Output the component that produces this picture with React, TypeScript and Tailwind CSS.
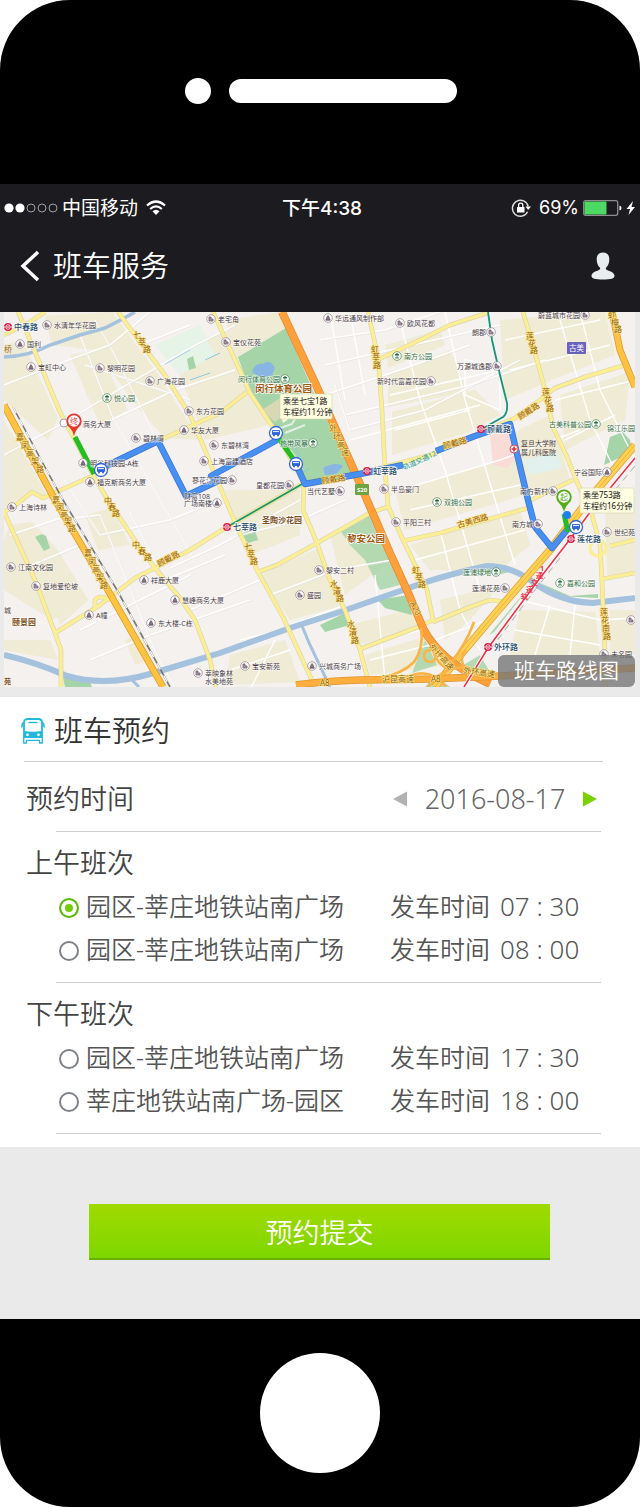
import { useState } from "react";

type Poi = [number, number, string, ("home" | "tower" | "park")?, ("l" | "r")?];

const pois: Poi[] = [
  [54, 325, "水清年华花园", "home"],
  [27, 344, "国利", "tower"],
  [38, 367, "宝虹中心", "tower"],
  [107, 368, "黎明花园", "home"],
  [157, 381, "广海花园", "home"],
  [196, 411, "东方花园", "home"],
  [83, 424, "商务大厦"],
  [191, 430, "华友大厦", "tower"],
  [143, 438, "碧林湾", "home"],
  [90, 463, "明谷科技园-A栋", "tower"],
  [97, 482, "福克斯商务大厦", "tower"],
  [218, 319, "老宅角", "home"],
  [233, 342, "宝仪花苑", "home"],
  [335, 318, "华远通风制作部", "tower"],
  [407, 323, "欧风花都", "home"],
  [221, 445, "东碧林湾", "home"],
  [211, 461, "上海富建酒店", "home"],
  [192, 480, "蓼花汀花园", "home", "r"],
  [184, 496, "财富108"],
  [184, 503, "广场南楼", "tower", "r"],
  [256, 485, "皇都花园", "home", "r"],
  [307, 491, "当代艺墅", "home", "r"],
  [391, 489, "半岛豪门", "home"],
  [377, 381, "新时代富嘉花园", "home", "r"],
  [538, 315, "蔚蓝城市花园", "home", "r"],
  [472, 332, "朗郡", "home", "r"],
  [457, 366, "万源城逸郡", "home", "r"],
  [574, 472, "宁谷国际", "tower", "r"],
  [520, 491, "南方新村", "home", "r"],
  [512, 524, "南方城", "home", "r"],
  [19, 507, "上海诗林", "home"],
  [18, 567, "江南文化园", "home"],
  [43, 586, "复地爱伦坡", "home"],
  [96, 615, "A幢", "tower"],
  [151, 580, "祥鹿大厦", "tower"],
  [182, 600, "慧峰商务大厦", "tower"],
  [158, 623, "东大楼-C栋", "tower"],
  [205, 673, "莘映象林", "home"],
  [205, 681, "水美地苑"],
  [252, 666, "宝安新苑", "home"],
  [319, 666, "兴城商务广场", "tower"],
  [326, 570, "黎安二村", "home"],
  [307, 595, "盛园", "home"],
  [403, 522, "平阳三村", "home"],
  [472, 588, "莲浦花苑", "home", "r"],
  [614, 532, "世纪苑", "home"],
  [611, 654, "未名园", "home"],
  [4, 610, "城"],
];

const greenLabels: Poi[] = [
  [114, 398, "悦心园", "park"],
  [404, 356, "南方公园", "park"],
  [444, 502, "双拥公园", "park"],
  [567, 583, "嘉和公园", "park"],
  [238, 379, "闵行体育公园", "park", "r"],
  [280, 443, "热带风暴", "park", "r"],
  [549, 424, "古美科普公园", "park", "r"],
  [463, 572, "莲浦绿地", "park", "r"],
  [607, 428, "锦江乐园"],
];

// text, first character, step to the next character
const stacked: [string, number, number, number, number][] = [
  ["七莘路", 133, 338, 5, 7],
  ["七莘路", 244, 550, 3, 7],
  ["嘉闵高架路", 16, 440, 5, 8],
  ["嘉闵高架路", 52, 503, 4, 7],
  ["嘉闵高架路", 84, 556, 4, 8],
  ["中春路", 104, 504, 4, 6],
  ["中春路", 132, 548, 6, 6],
  ["虹莘路", 371, 352, 1, 8],
  ["虹莘路", 412, 573, 3, 7],
  ["水清路", 330, 587, 3, 7],
  ["水清路", 347, 627, 2, 8],
  ["莲花路", 526, 339, 2, 7],
  ["莲花路", 542, 395, 2, 8],
  ["莲花南路", 600, 615, 1, 8],
  ["外环高速", 329, 431, 4, 8],
  ["虹梅路", 608, 318, 3, 7],
];

const slanted: [string, number, number, number][] = [
  ["顾戴路", 159, 567, -28],
  ["顾戴路", 322, 484, -9],
  ["顾戴路", 444, 449, -15],
  ["顾戴路", 520, 420, -33],
  ["古美西路", 458, 528, -16],
  ["外环高速", 429, 647, 48],
  ["外环高速", 463, 673, 8],
  ["沪昆高速", 382, 682, 0],
];

const yellowRoads = [
  "M4 335 25 325 45 312",
  "M18 312 25 328 60 412 75 440 93 475 108 500 138 545 155 568 180 598 195 620 210 660 216 687",
  "M118 312 140 342 165 375 190 415 205 450 215 475 232 515 240 533 258 572 283 617 315 687",
  "M4 512 17 504 32 492 43 498 90 477 133 453 160 440 220 413 247 392",
  "M4 512 35 580 55 633 61 650V687",
  "M55 633 100 605 135 578 155 568 190 550 227 527 304 483",
  "M95 607V600Q100 594 110 600",
  "M213 312 235 360 250 393 276 432 304 483 303 510 317 543 330 580 345 610 360 650 370 687",
  "M258 572 277 565 317 543 370 513 390 506",
  "M368 312 378 357 382 410 385 470 388 506 403 540 427 590 433 620 418 627 360 649",
  "M377 360 420 340 450 325 487 313",
  "M403 541 440 533 528 508",
  "M523 312 537 360 545 390 553 427 567 457 577 482 592 515 600 545 602 583 605 653V687",
  "M304 483 365 472 430 455 487 430 515 418 540 400 555 388 585 377 622 366",
  "M531 500 573 480",
  "M433 622 470 607 490 600 506 602",
  "M602 579 635 573",
  "M610 546 635 540",
];

const whiteRoads = [
  "M4 455 60 425 118 390 190 348 235 325", "M52 345 80 335 112 415 135 455 195 560", "M95 320 115 355 155 435",
  "M4 385 55 365 110 345 150 312", "M140 345 190 325", "M85 365 190 400", "M90 430 175 390 235 370",
  "M65 480 100 535 170 520 220 500", "M60 520 100 515 135 600 155 650 175 687", "M130 512 165 580 225 555",
  "M10 535 70 515", "M20 570 80 545 60 505", "M80 630 140 600 190 575", "M90 660 150 635 250 600",
  "M170 568 220 545 300 500", "M190 610 260 580", "M240 535 300 520 345 500", "M270 595 335 570 392 560",
  "M290 625 340 607", "M310 400 400 370 470 345", "M320 340 385 330 440 312", "M335 385 350 430 425 410 520 360",
  "M325 365 500 325", "M345 415 470 385 545 360", "M350 440 480 405", "M400 320 420 400 445 470 480 590",
  "M445 312 465 400 495 500 515 565", "M390 395 500 370", "M395 430 470 410", "M400 490 500 460 580 430",
  "M505 340 600 320", "M510 370 610 345", "M555 400 635 380", "M560 320 590 420 620 480", "M580 312 600 390 635 460",
  "M565 440 615 415", "M410 510 520 485", "M415 560 525 530", "M440 530 460 610 480 650", "M520 600 600 620 635 618",
  "M515 630 600 645", "M550 605 535 655", "M575 605 570 655", "M435 640 500 615", "M385 640 420 630",
  "M370 660 430 645", "M610 500 635 495", "M605 600 635 595", "M240 640 300 625", "M230 670 290 650",
  "M250 690 275 640", "M375 575 385 680", "M330 312 345 400", "M350 312 365 395", "M465 360 500 365 500 410 465 395Z",
];

const blocks = [
  "M4 345 22 340 58 418 48 440 4 400Z",
  "M45 316 112 312 155 370 200 440 165 438 140 410 95 350 52 345Z",
  "M70 355 98 350 128 410 100 425Z",
  "M170 350 230 330 270 425 205 440Z",
  "M4 420 50 500 30 492 4 508Z",
  "M30 520 58 550 88 600 60 625Z",
  "M10 525 30 522 70 610 52 620 4 590V540Z",
  "M85 515 112 508 130 545 98 550Z",
  "M4 640 50 640 58 660 4 650Z",
  "M125 640 145 635 150 660 135 665Z",
  "M225 320 280 312 290 330 240 355Z",
  "M225 490 300 490 300 535 250 555Z",
  "M260 575 318 548 335 590 345 605 290 620Z",
  "M330 535 380 515 392 560 345 595Z",
  "M230 655 285 640 300 682 225 685Z",
  "M350 625 415 608 425 625 360 645Z",
  "M365 655 430 635 450 665 370 675Z",
  "M392 412 475 390 500 415 470 432 392 455Z",
  "M388 375 450 350 468 392 388 407Z",
  "M395 490 520 455 525 495 405 530Z",
  "M385 345 440 330 445 345 388 368Z",
  "M500 320 605 312 615 355 552 380 505 400Z",
  "M560 395 630 372 625 420 565 450Z",
  "M515 432 550 415 570 480 530 495Z",
  "M410 545 520 510 530 545 500 570 430 570Z",
  "M605 500 635 495V575L607 575Z",
  "M520 610 595 612 600 655 510 655Z",
  "M610 610H635V655H610Z",
  "M440 600 500 585 470 620 445 640Z",
];

const cjk = "font-['Noto_Sans','Noto_Sans_CJK_SC',sans-serif]";

function PoiLabel({ item, color }: { item: Poi; color: string }) {
  const [x, y, text, kind, side] = item;
  const width = [...text].reduce((w, c) => w + (c.charCodeAt(0) > 255 ? 7 : 4), 0);
  const cx = side === "r" ? x + width + 5 : x - 7;
  return (
    <g>
      <text x={x} y={y + 3} fontSize="7" fill={color} stroke="#ffffff" strokeOpacity="0.7" strokeWidth="1.2" paintOrder="stroke">{text}</text>
      {kind && (
        <g transform={`translate(${cx} ${y})`}>
          <circle r="4.3" fill="#fff" stroke={kind === "park" ? "#5b9065" : "#9b8e98"} strokeWidth="0.8" />
          {kind === "park" && <path d="M-2 2H2M0 2V-1M-2-1Q0-4 2-1Z" fill="#28713c" stroke="#28713c" strokeWidth="0.8" />}
          {kind === "tower" && <path d="M-2 2 -1-1 0-2.5 1-1 2 2ZM-2.5 2H2.5" fill="#8b7483" stroke="#6e5a69" strokeWidth="0.8" />}
          {kind === "home" && <path d="M-2 2V-2H0V0H2V2Z" fill="#aa9aa5" stroke="#6e5a69" strokeWidth="0.8" />}
        </g>
      )}
    </g>
  );
}

function Metro({ x, y, name }: { x: number; y: number; name: string }) {
  return (
    <g transform={`translate(${x} ${y})`}>
      <circle r="4" fill="#d91e49" />
      <path d="M-4 0H4" stroke="#fff" strokeWidth="1" />
      <path d="M2-1.500Q0-3-2-1.500M-2 1.500Q0 3 2 1.500" fill="none" stroke="#fff" strokeWidth="0.8" />
      <text x="6" y="3" fontSize="8" fontWeight="500" fill="#24486a" stroke="#fff" strokeWidth="1.5" paintOrder="stroke">{name}</text>
    </g>
  );
}

function BusStop({ x, y }: { x: number; y: number }) {
  return (
    <g transform={`translate(${x} ${y})`}>
      <circle r="6.5" fill="#fff" stroke="#3165dd" strokeWidth="1.3" />
      <rect x="-4" y="-3" width="8" height="5" rx="1" fill="#3165dd" />
      <path d="M-3-1.500H3" stroke="#dce8ff" strokeWidth="1.2" />
      <circle cx="-2" cy="2.5" r="1" fill="#3165dd" /><circle cx="2" cy="2.5" r="1" fill="#3165dd" />
    </g>
  );
}

function Pin({ x, y, color, text }: { x: number; y: number; color: string; text: string }) {
  return (
    <g transform={`translate(${x} ${y})`}>
      <path d="M0 15Q-1.500 9-5 6A7.700 7.700 0 1 1 5 6Q1.500 9 0 15Z" fill={color} />
      <circle r="5.8" fill="#fff" />
      <text y="2.800" textAnchor="middle" fontSize="8" fill={color}>{text}</text>
    </g>
  );
}

function Callout({ x, y, w, lines }: { x: number; y: number; w: number; lines: string[] }) {
  return (
    <g transform={`translate(${x} ${y})`}>
      <rect width={w} height="25" rx="1" fill="#fffee1" stroke="#d3d0af" strokeWidth="0.6" />
      {lines.map((l, i) => (
        <text key={l} x="3" y={10 + i * 11} fontSize="8" fill="#111">{l}</text>
      ))}
    </g>
  );
}

function RouteMap() {
  const railway = "M13 407 40 458 63 500 117 590 170 687";
  const viaduct = "M4 405 55 500 105 585 163 687";
  const hongmei = "M612 312 620 350 635 387";
  const southExpress = "M635 445 590 498 550 550 500 608 457 659 435 687";
  const ring = "M282 312 317 387 357 477 390 553 410 597 423 628Q440 662 490 684";
  const a8 = "M296 685Q325 681 360 680L430 679 500 676 635 668";
  const metroOne = "M635 458 588 515 571 538 540 578 488 648 464 687";
  const busRoute = "M100 469 158 441 186 496 220 480 211 476 277 440M296 464 305 484 365 473 403 465M436 451 475 436 510 424 528 500 535 527 552 548 567 530";
  return (
    <svg viewBox="4 312 631 375" className={`block h-auto w-full font-normal ${cjk}`} role="img" aria-label="班车路线图">
      <rect x="4" y="312" width="631" height="375" fill="#f4f1ee" />
      {blocks.map((d) => <path key={d} d={d} fill="#efebd5" />)}
      <path d="M490 435 515 428 518 455 508 468 493 465Z" fill="#fadbd6" />
      <path d="M523 460 557 452 562 468 530 475Z" fill="#e2f1ee" />
      <path d="M155 345 200 325 215 355 180 375Z" fill="#e6f3e7" />
      <g fill="#a5d4a8">
        <path d="M238 357 286 328 318 402 355 476 305 483 278 432 250 390Z" />
        <path d="M187 359 193 356 196 368 189 370Z" />
        <path d="M35 537 42 534 46 536 50 548 44 551 39 543Z" />
        <path d="M63 677 90 682 92 687H65Z" />
        <path d="M340 530 370 514 383 540 400 585 380 590 365 560 350 545Z" opacity=".8" />
        <path d="M610 437 623 432 630 440 632 452 604 465Z" />
        <path d="M378 600 408 595 412 615 385 608Z" />
        <path d="M320 625 345 613 350 625 325 632Z" />
        <path d="M518 600 523 595 494 632 489 635Z" />
        <path d="M540 583 570 596 598 594V598L560 596Z" />
        <path d="M462 574 480 568 510 572 500 574 480 572Z" />
        <path d="M238 532 255 530 258 540 248 543Z" />
        <path d="M425 640 437 665 412 673ZM455 670 480 655 490 672ZM435 675 450 687H425Z" opacity=".8" />
      </g>
      <path d="M262 410 280 398 290 410 275 422Z" fill="#d8d8b4" />
      <path d="M252 372Q255 362 263 364 270 358 275 368L272 375Q262 380 252 372ZM323 468Q335 461 343 466L336 474 325 475Z" fill="#89b5e3" />
      <path d="M275 430 292 424 302 407M290 450 302 466M285 433 305 425" fill="none" stroke="#e4eee2" strokeWidth="2" />
      <path d="M294 445 300 457M297 475 310 468M165 364 190 350M190 380 210 373M205 360 220 353" fill="none" stroke="#8cc8e0" strokeWidth="1" />
      <g fill="none" stroke="#fff" strokeWidth="1.4">
        {whiteRoads.map((d) => <path key={d} d={d} />)}
      </g>
      <g fill="none" stroke="#e2dfe0" strokeWidth="0.5">
        {whiteRoads.slice(0, 24).map((d) => <path key={d} d={d} transform="translate(1 1)" />)}
      </g>
      <g fill="none" stroke="#a4c2dd">
        <path d="M4 357Q30 356 50 345L80 335 105 328Q125 318 135 312" strokeWidth="3.5" />
        <path d="M4 655Q35 662 67 676Q105 687 150 674L220 653 293 627 343 611 420 584Q453 573 487 566 512 566 533 582 560 602 593 603L635 598" strokeWidth="6" />
        <path d="M302 626 310 645 330 687M130 678 139 687" strokeWidth="3" />
      </g>
      <g fill="none" stroke="#dcd4a8" strokeWidth="4.600" strokeLinejoin="round">
        {yellowRoads.map((d) => <path key={d} d={d} />)}
      </g>
      <g fill="none" stroke="#fbee94" strokeWidth="3.400" strokeLinejoin="round">
        {yellowRoads.map((d) => <path key={d} d={d} />)}
        <circle cx="598" cy="548" r="8" />
      </g>
      <g fill="none" strokeLinejoin="round">
        <path d={railway} stroke="#777" strokeWidth="1.600" />
        <path d={railway} stroke="#fff" strokeWidth="1.200" strokeDasharray="7 7" />
        <path d={viaduct} stroke="#dd9c2c" strokeWidth="7" />
        <path d={viaduct} stroke="#ffc241" strokeWidth="5.400" />
        <path d={hongmei} stroke="#dd9c2c" strokeWidth="7" />
        <path d={hongmei} stroke="#ffc241" strokeWidth="5.400" />
        <path d={southExpress} stroke="#dda43c" strokeWidth="8" />
        <path d={southExpress} stroke="#ffd152" strokeWidth="6.400" />
        <path d={southExpress} stroke="#e8a83b" strokeWidth="0.700" />
        <path d={ring} stroke="#dc8a38" strokeWidth="8" />
        <path d={ring} stroke="#ffa03a" strokeWidth="6.600" />
        <path d={a8} stroke="#de9534" strokeWidth="7.500" />
        <path d={a8} stroke="#ffad3c" strokeWidth="6" />
        <g stroke="#f9b447" strokeWidth="2.600">
          <path d="M421 628Q424 648 414 662 402 674 380 678" />
          <circle cx="430" cy="656" r="6" />
          <path d="M433 650Q436 664 450 670M402 680Q428 664 446 687M428 687Q445 664 470 668M466 650Q456 662 470 672 480 676 500 677M447 668Q466 645 474 622" />
        </g>
        <path d={metroOne} stroke="#fff" strokeWidth="3.500" />
        <path d={metroOne} stroke="#ee3348" strokeWidth="1.600" />
        <path d="M635 466 600 508M560 558 535 590 490 650" stroke="#999" strokeWidth="0.8" strokeDasharray="7 5" />
        <path d="M227 527 304 483M488 312 492 340 500 375 507 403Q508 413 503 417L480 430" stroke="#16957a" strokeWidth="1.800" />
        <path d={busRoute} stroke="#3e74c9" strokeWidth="6.400" />
        <path d={busRoute} stroke="#478ff3" strokeWidth="5" />
        <path d="M75 437 94 474M277 436 294 460M564 514 568 532" stroke="#23bd22" strokeWidth="5" />
      </g>
      <rect x="355" y="484" width="14" height="11" rx="1" fill="#6fa342" />
      <text x="362" y="492" fontSize="6" fontWeight="700" textAnchor="middle" fill="#fff">S20</text>
      <rect x="567" y="342" width="19" height="12" rx="1" fill="#6a63bc" />
      <text x="569" y="351" fontSize="7.500" fill="#fff">古美</text>

      {pois.map((p) => <PoiLabel key={`${p[0]}-${p[1]}`} item={p} color="#4a3d47" />)}
      {greenLabels.map((p) => <PoiLabel key={p[2]} item={p} color="#35704a" />)}
      <g fill="#94600f" stroke="#fde68a" strokeWidth="1.200" paintOrder="stroke">
        {stacked.map(([t, x, y, dx, dy]) => (
          <text key={`${x}-${y}`} fontSize="8" x={[...t].map((_, i) => x + i * dx).join(" ")} y={[...t].map((_, i) => y + i * dy).join(" ")}>{t}</text>
        ))}
        {slanted.map(([t, x, y, a]) => (
          <text key={`${x}-${y}`} fontSize="8" transform={`translate(${x} ${y}) rotate(${a})`}>{t}</text>
        ))}
        <text x="320" y="686" fontSize="8">A8</text>
        <text x="431" y="682" fontSize="8">A8</text>
        <text transform="translate(410 603) rotate(65)" fontSize="8">A20</text>
      </g>
      <g fill="#7d4f1d" stroke="#fff" strokeWidth="1.500" paintOrder="stroke" fontWeight="700">
        <text x="255" y="392" fontSize="9.500" fill="#a05a12">闵行体育公园</text>
        <text x="347" y="542" fontSize="9.500" fill="#a05a12">黎安公园</text>
        <text x="262" y="523" fontSize="8">圣陶沙花园</text>
        <text x="12" y="625" fontSize="8">颐景园</text>
      </g>
      <text transform="translate(404 470) rotate(-24)" fontSize="7" fill="#169c9c">轨道交通12</text>
      <text x="521 526 531 536 540" y="599 592 585 578 571" fontSize="7" fontWeight="700" fill="#ee3348">轨道交通1</text>
      <text x="4" y="352" fontSize="8" fill="#9c6814">桥</text>
      <text x="4" y="684" fontSize="7" fontWeight="700" fill="#7d4f1d">苑</text>
      <Metro x={8} y={327} name="中春路" />
      <Metro x={227} y={527} name="七莘路" />
      <Metro x={367} y={471} name="虹莘路" />
      <Metro x={481} y={429} name="顾戴路" />
      <Metro x={571} y={539} name="莲花路" />
      <Metro x={488} y={647} name="外环路" />
      <circle cx="514" cy="449" r="4" fill="#fff" stroke="#d94d53" />
      <path d="M514 446.500V451.500M511.500 449H516.500" stroke="#df2d36" strokeWidth="1.600" />
      <text x="521" y="446" fontSize="7" fill="#4a3d47">复旦大学附</text>
      <text x="521" y="455" fontSize="7" fill="#4a3d47">属儿科医院</text>
      <circle cx="64" cy="423" r="4" fill="#fff" stroke="#9b8e98" strokeWidth="0.8" />
      <circle cx="567" cy="515" r="4" fill="#1a80ed" />
      <g transform="translate(631 620)">
        <circle r="4.300" fill="#fff" stroke="#9b8e98" strokeWidth="0.800" />
        <path d="M-2 2V-2H0V0H2V2Z" fill="#aa9aa5" stroke="#6e5a69" strokeWidth="0.800" />
      </g>
      <BusStop x={101} y={470} />
      <BusStop x={276} y={433} />
      <BusStop x={296} y={464} />
      <BusStop x={576} y={527} />
      <Pin x={74} y={421} color="#e9382f" text="终" />
      <Pin x={564} y={497} color="#52ad16" text="起" />
      <path d="M281 415 283 423 294 415Z" fill="#fffee1" />
      <Callout x={280} y={394} w={52} lines={["乘坐七宝1路", "车程约11分钟"]} />
      <Callout x={580} y={488} w={54} lines={["乘坐753路", "车程约16分钟"]} />
    </svg>
  );
}

function StatusBar() {
  return (
    <div className="grid h-12 grid-cols-[1fr_auto_1fr] items-center px-1 text-[19px] leading-6 font-normal">
      <div className="flex items-center gap-1">
        <svg className="h-3 w-[54px]" viewBox="0 0 54 12" aria-hidden="true">
          <circle cx="5" cy="6" r="4.600" fill="#fff" /><circle cx="16" cy="6" r="4.600" fill="#fff" />
          <g fill="none" stroke="#a0a0a4"><circle cx="27" cy="6" r="4" /><circle cx="38" cy="6" r="4" /><circle cx="49" cy="6" r="4" /></g>
        </svg>
        <span>中国移动</span>
        <svg className="ml-1 h-4 w-5" viewBox="0 0 20 16" aria-label="Wi-Fi">
          <g fill="none" stroke="#fff" strokeWidth="2.200"><path d="M1 5.500Q10-2.500 19 5.500" /><path d="M4.200 9Q10 3.800 15.800 9" /></g>
          <path d="M6.500 11.300Q10 8.300 13.500 11.300L10 15Z" fill="#fff" />
        </svg>
      </div>
      <div className="pl-1 font-medium"><span>下午</span><span className="font-['Inter',sans-serif]">4:38</span></div>
      <div className="flex items-center justify-end gap-1">
        <svg className="mr-1 size-5" viewBox="0 0 20 20" aria-hidden="true">
          <path d="M16.600 13.800A8 8 0 1 1 17.200 8.500" fill="none" stroke="#ddd" strokeWidth="1.400" />
          <path d="M14.500 8.500H20L17.200 12Z" fill="#fff" />
          <rect x="6" y="9" width="7.500" height="5.500" rx=".6" fill="#fff" /><path d="M7.600 9V7.200a2.100 2.100 0 0 1 4.200 0V9" fill="none" stroke="#fff" strokeWidth="1.300" />
        </svg>
        <span className="font-['Inter',sans-serif] text-[18px]">69%</span>
        <svg className="h-4 w-[53px]" viewBox="0 0 53 16" aria-label="电量">
          <rect x=".7" y=".7" width="34" height="14.600" rx="2" fill="none" stroke="#8e8e92" strokeWidth="1.300" />
          <rect x="1.500" y="1.500" width="22" height="13" rx="1" fill="#4cd964" />
          <path d="M36.500 5.500Q38.500 6 38.500 8T36.500 10.500Z" fill="#fff" />
          <path d="M50 1 43.500 9H47L45.500 15 52 7H48.500Z" fill="#fff" />
        </svg>
      </div>
    </div>
  );
}

function BusIcon() {
  return (
    <svg className="h-[26px] w-6 shrink-0" viewBox="0 0 24 26" fill="none" aria-hidden="true">
      <path d="M3 19V4.500Q3 1 7 1H17Q21 1 21 4.500V19Z" stroke="#22b8dc" strokeWidth="1.800" />
      <path d="M3 13Q12 14.500 21 13V20H3Z" fill="#22b8dc" />
      <path d="M7.500 4.500H16.500" stroke="#22b8dc" strokeWidth="1.400" />
      <path d="M2.500 4.500Q.9 5.500 .9 9M21.500 4.500Q23.100 5.500 23.100 9" stroke="#22b8dc" strokeWidth="1.600" strokeLinecap="round" />
      <circle cx="6.500" cy="16.800" r="1.400" fill="#fff" /><circle cx="17.500" cy="16.800" r="1.400" fill="#fff" />
      <path d="M2.700 20V25H5.500V22.300H18.500V25H21.300V20" stroke="#22b8dc" strokeWidth="1.300" strokeLinejoin="round" />
    </svg>
  );
}

const morning = [
  { id: "am1", route: "园区-莘庄地铁站南广场", time: "07 : 30" },
  { id: "am2", route: "园区-莘庄地铁站南广场", time: "08 : 00" },
];
const afternoon = [
  { id: "pm1", route: "园区-莘庄地铁站南广场", time: "17 : 30" },
  { id: "pm2", route: "莘庄地铁站南广场-园区", time: "18 : 00" },
];

function Shifts({ title, items, value, onChange }: { title: string; items: typeof morning; value: string; onChange: (v: string) => void }) {
  return (
    <fieldset>
      <legend className="flex h-[54px] items-end pl-[26px] text-[27px] leading-[46px] text-[#444444]">{title}</legend>
      {items.map((s) => (
        <label key={s.id} className="flex h-[43px] items-center gap-[7px] pr-14 pl-[59px] text-[25px] leading-8 text-[#555555]">
          <input
            type="radio"
            name="shift"
            checked={value === s.id}
            onChange={() => onChange(s.id)}
            className="size-5 shrink-0 appearance-none rounded-full border-2 border-[#7e8287] bg-white checked:border-[#5cb80a] checked:bg-[#70cf00] checked:shadow-[inset_0_0_0_4px_white]"
          />
          <span className="flex-1 pb-[3px] whitespace-nowrap">{s.route}</span>
          <span className="flex w-[194px] shrink-0 items-baseline gap-[10px] pb-[3px] whitespace-nowrap">
            <span>发车时间</span>
            <span className="text-[26px]">{s.time}</span>
          </span>
        </label>
      ))}
      <hr className="mt-[10px] mr-[39px] ml-14 border-[#cccccc]" />
    </fieldset>
  );
}

export default function App() {
  const [shift, setShift] = useState("am1");
  const [day, setDay] = useState(0);
  const date = new Date(Date.UTC(2016, 7, 17 + day)).toISOString().slice(0, 10);

  return (
    <div className={`bg-white font-[350] ${cjk}`}>
      <div className="overflow-hidden rounded-[70px] bg-black">
        <div className="flex h-[184px] items-start justify-center gap-[18px] pt-[78px] pl-[2px]">
          <div className="size-[26px] rounded-full bg-white" />
          <div className="mt-px h-6 w-[228px] rounded-full bg-white" />
        </div>

        <header className="bg-[#1c1b20] text-white">
          <StatusBar />
          <div className="flex h-20 items-center px-5 pb-3">
            <button type="button" aria-label="返回" className="mr-[13px]">
              <svg className="h-8 w-5" viewBox="0 0 20 32" fill="none" aria-hidden="true"><path d="M18 2 3 16 18 30" stroke="#fff" strokeWidth="3.500" /></svg>
            </button>
            <h1 className="flex-1 text-[29px] leading-10">班车服务</h1>
            <button type="button" aria-label="个人中心" className="mr-[5px]">
              <svg className="h-7 w-6" viewBox="0 0 24 28" aria-hidden="true">
                <path d="M12 .5C16.500 .5 18.300 3.500 18.300 7.500 18.300 11 17 14 15 15.800 14.500 17 15 17.800 17 18.500 21 19.500 23.500 21.500 23.500 24 23.500 26.500 20 27.500 12 27.500S.5 26.500.5 24C.5 21.500 3 19.500 7 18.500 9 17.800 9.500 17 9 15.800 7 14 5.700 11 5.700 7.500 5.700 3.500 7.500.5 12 .5Z" fill="#e9edf0" />
              </svg>
            </button>
          </div>
        </header>

        <main className="bg-[#eaeaea]">
          <figure className="relative pr-[5px] pb-[10px] pl-1">
            <RouteMap />
            <figcaption className="absolute right-[5px] bottom-[10px] h-8 w-[137px] rounded-md bg-[#777777]/80 text-center text-[21px] leading-[30px] text-white">班车路线图</figcaption>
          </figure>

          <section className="bg-white pb-[13px]">
            <div className="mr-[37px] ml-6 flex h-[65px] items-center border-b border-[#cccccc]">
              <div className="-ml-[3px] flex items-center gap-[9px] pt-[3px]">
                <BusIcon />
                <h2 className="text-[29px] leading-10 text-[#333333]">班车预约</h2>
              </div>
            </div>
            <div className="flex h-[69px] items-center pt-1 pr-[43px] pl-[26px]">
              <h3 className="flex-1 text-[27px] leading-9 text-[#444444]">预约时间</h3>
              <button type="button" aria-label="前一天" onClick={() => setDay(day - 1)}>
                <svg className="h-4 w-[14px]" viewBox="0 0 14 16" aria-hidden="true"><path d="M14 .5V15.500L0 8Z" fill="#b2b2b2" /></svg>
              </button>
              <time className="w-[176px] text-center text-[27px] leading-9 text-[#666666]">{date}</time>
              <button type="button" aria-label="后一天" onClick={() => setDay(day + 1)}>
                <svg className="h-4 w-[14px]" viewBox="0 0 14 16" aria-hidden="true"><path d="M0 .5V15.500L14 8Z" fill="#79d200" /></svg>
              </button>
            </div>
            <hr className="mr-[39px] ml-14 border-[#cccccc]" />
            <Shifts title="上午班次" items={morning} value={shift} onChange={setShift} />
            <Shifts title="下午班次" items={afternoon} value={shift} onChange={setShift} />
          </section>

          <div className="pt-[57px] pr-[90px] pb-[59px] pl-[89px]">
            <button type="button" className="h-14 w-full border-b-2 border-[#68b004] bg-linear-to-b from-[#a0da00] to-[#7ed600] pt-1 text-[27px] leading-10 text-white">预约提交</button>
          </div>
        </main>

        <div className="flex h-[188px] justify-center pt-[34px]">
          <button type="button" aria-label="主屏幕" className="size-[120px] rounded-full bg-white" />
        </div>
      </div>
    </div>
  );
}
